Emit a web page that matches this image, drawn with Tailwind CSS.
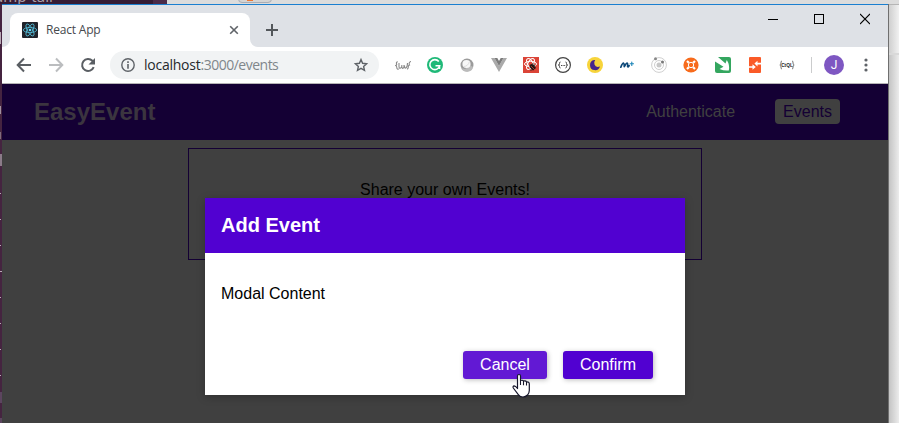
<!DOCTYPE html>
<html lang="en">
<head>
<meta charset="utf-8">
<title>React App</title>
<script src="https://cdn.jsdelivr.net/npm/@tailwindcss/browser@4"></script>
</head>
<body class="w-[899px] h-[423px] overflow-hidden bg-[#e8e8e8] font-['Liberation_Sans',Arial,sans-serif]">
<div class="relative flex flex-col w-[899px] h-[423px] overflow-hidden">
  <!-- desktop strip above the window -->
  <div class="flex h-1 shrink-0 overflow-hidden">
    <div class="relative w-[153px] h-1 overflow-hidden bg-[#351c35]"><span class="absolute -top-[12px] -left-[6px] text-[15px] leading-4 text-[#a99fa9] font-['Noto_Sans',sans-serif]">ump-tail</span></div>
    <div class="w-[14px] bg-[#4b2b49]"></div>
    <div class="relative flex-1 bg-[#dcdcdc]">
      <div class="absolute left-[71px] -top-3 w-[34px] h-[15px] rounded border border-[#a9adb5] bg-[#d4d4d4]"></div>
      <div class="absolute left-[80px] top-0 w-[6px] h-px bg-[#ee7733]"></div>
    </div>
  </div>
  <div class="flex flex-1 min-h-0">
    <!-- terminal edge -->
    <div class="relative w-[2px] shrink-0 bg-[#452440]">
      <div class="absolute top-7 h-3 w-px bg-[#b9aab6]"></div>
      <div class="absolute top-[102px] h-2 w-px bg-[#a090a0]"></div>
      <div class="absolute top-[128px] h-[7px] w-px bg-[#806a7d]"></div>
      <div class="absolute top-[150px] h-3 w-[2px] bg-[#8b7b89]"></div>
      <div class="absolute top-[189px] h-px w-px bg-[#b9aab6]"></div>
      <div class="absolute top-[215px] h-px w-px bg-[#b9aab6]"></div>
      <div class="absolute top-[241px] h-px w-px bg-[#b9aab6]"></div>
      <div class="absolute top-[267px] h-px w-[2px] bg-[#b9aab6]"></div>
      <div class="absolute top-[293px] h-px w-px bg-[#b9aab6]"></div>
      <div class="absolute top-[319px] h-px w-px bg-[#b9aab6]"></div>
      <div class="absolute top-[345px] h-px w-px bg-[#b9aab6]"></div>
      <div class="absolute top-[371px] h-px w-px bg-[#b9aab6]"></div>
      <div class="absolute top-[388px] h-[11px] w-[2px] bg-[#5c455f]"></div>
      <div class="absolute top-[414px] h-[5px] w-[2px] bg-[#5c455f]"></div>
    </div>
    <!-- browser window -->
    <div class="flex flex-col w-[886px] shrink-0 border-t border-[#1a7fd0] bg-white">
      <div class="flex h-[42px] shrink-0 bg-[#dee1e6]">
        <div class="relative ml-2 mt-2 flex items-center w-[240px] h-[34px] rounded-t-lg bg-white pl-3 pr-[10px]">
          <svg class="absolute -left-2 bottom-0" width="8" height="8"><path d="M8 0V8H0A8 8 0 0 0 8 0" fill="#fff"/></svg>
          <svg class="absolute -right-2 bottom-0" width="8" height="8"><path d="M0 0V8H8A8 8 0 0 1 0 0" fill="#fff"/></svg>
          <svg width="16" height="16" viewBox="0 0 16 16"><rect width="16" height="16" rx="1" fill="#20232a"/><g fill="none" stroke="#53b9d4" stroke-width=".85"><ellipse cx="8" cy="8" rx="6.7" ry="2.6"/><ellipse cx="8" cy="8" rx="6.7" ry="2.6" transform="rotate(60 8 8)"/><ellipse cx="8" cy="8" rx="6.7" ry="2.6" transform="rotate(120 8 8)"/></g><circle cx="8" cy="8" r="1.3" fill="#61dafb"/></svg>
          <span class="ml-2 text-[12px] leading-4 text-[#45494d] font-['Open_Sans',sans-serif] tracking-[-0.2px]">React App</span>
          <svg class="ml-auto" width="12" height="12" viewBox="0 0 12 12" stroke="#5f6368" stroke-width="1.6"><path d="M2.2 2.2l7.6 7.6M9.8 2.2L2.2 9.8"/></svg>
        </div>
        <svg class="ml-4 mt-[19px]" width="12" height="12" viewBox="0 0 12 12" stroke="#53575b" stroke-width="2"><path d="M6 0v12M0 6h12"/></svg>
        <div class="ml-auto flex">
          <div class="flex w-[46px] h-[29px] justify-center"><svg width="10" height="29" shape-rendering="crispEdges"><path d="M0 14.5h10" stroke="#000"/></svg></div>
          <div class="flex w-[46px] h-[29px] justify-center"><svg width="10" height="29" shape-rendering="crispEdges"><path d="M.5 9.5h9v9h-9z" fill="none" stroke="#000"/></svg></div>
          <div class="flex w-[46px] h-[29px] justify-center"><svg width="10" height="29"><path d="M0 9l10 10M10 9L0 19" stroke="#000" stroke-width="1.1"/></svg></div>
        </div>
      </div>
      <div class="flex items-center h-[37px] shrink-0 border-b border-[#b6b4b6] pl-[6px]">
        <div class="flex w-8 justify-center"><svg width="16" height="16" viewBox="0 0 16 16" fill="none" stroke="#5a5e63" stroke-width="2"><path d="M15 8H2.5M8 1.5L1.7 8 8 14.5"/></svg></div>
        <div class="flex w-8 justify-center"><svg width="16" height="16" viewBox="0 0 16 16" fill="none" stroke="#bbbdbf" stroke-width="2"><path d="M1 8h12.5M8 1.5L14.3 8 8 14.5"/></svg></div>
        <div class="flex w-8 justify-center"><svg width="16" height="16" viewBox="0 0 16 16"><path d="M13.7 10.2A6 6 0 1 1 12.4 3.8L14 5.5" fill="none" stroke="#5a5e63" stroke-width="2"/><path d="M15 1v6.5H8.5z" fill="#5a5e63"/></svg></div>
        <div class="ml-[6px] flex items-center w-[269px] h-7 rounded-full bg-[#f1f3f4] pl-[11px] pr-[10px]">
          <svg width="14" height="14" viewBox="0 0 14 14"><circle cx="7" cy="7" r="6.2" fill="none" stroke="#5f6368" stroke-width="1.4"/><path d="M7 6v4.7M7 3.3v1.6" stroke="#5f6368" stroke-width="1.6"/></svg>
          <span class="ml-[9px] text-[14px] leading-5 text-[#80868b] font-['Open_Sans',sans-serif] tracking-[-0.5px]"><span class="text-[#26292c] tracking-[-0.24px]">localhost</span>:3000/events</span>
          <svg class="ml-auto" width="16" height="16" viewBox="0 0 16 16"><path d="M8 2.600l1.600 3.700 4 .4-3 2.700.9 4L8 11.300l-3.500 2.100.9-4-3-2.700 4-.4z" fill="none" stroke="#5f6368" stroke-width="1.4"/></svg>
        </div>
        <div class="ml-2 flex items-center">
          <div class="flex w-8 justify-center"><svg width="16" height="16" viewBox="0 0 16 16" fill="none" stroke="#8a8a8a" stroke-width="1.100"><path d="M2.800 4.800Q.8 5 1.600 7 2 8 .6 8.500 2 9 1.800 11 2 12.400 3.800 12M4 6v3.500q.2 2.300 1.600 1.600T6.800 8.500M6.800 8v2q.7 2 1.600 1 .9-1 .5-3M9.500 8.500q0 3 1.200 2.600Q12.500 10 12.500 6M12 12.200q1.500-.5 1.300-2.700Q13.300 8.500 14.500 8 13.800 7 14.500 5.500 15.300 4.400 16 4.500"/></svg></div>
          <div class="flex w-8 justify-center"><svg width="16" height="16" viewBox="0 0 16 16"><circle cx="8" cy="8" r="8" fill="#1fb978"/><path d="M11.800 4.600A5 5 0 1 0 12.700 8.700H8.500M12.500 8.500v3.500" fill="none" stroke="#fff" stroke-width="1.600"/></svg></div>
          <div class="flex w-8 justify-center"><svg width="16" height="16" viewBox="0 0 16 16"><circle cx="8" cy="8" r="6.500" fill="#9b9b9b"/><path d="M2 11A6.500 6.500 0 0 0 14.200 10L11 8.500 6 12z" fill="#bbb"/><circle cx="7.500" cy="7" r="4.100" fill="#f7f7f7"/><path d="M4.500 9.500Q9 9.500 10.500 4.500" fill="none" stroke="#ddd"/></svg></div>
          <div class="flex w-8 justify-center"><svg width="16" height="16" viewBox="0 0 16 16"><path d="M0 1h3.500L8 9l4.500-8H16L8 15z" fill="#aaa"/><path d="M3.500 1H6.300L8 4l1.700-3h2.800L8 9z" fill="#7c7c7c"/></svg></div>
          <div class="flex w-8 justify-center"><svg width="16" height="16" viewBox="0 0 16 16"><path fill="#db4437" d="M0 0h16v16H0z"/><g fill="none" stroke="#fff" stroke-width="1"><ellipse cx="7.500" cy="7" rx="6" ry="2.700"/><ellipse cx="7.500" cy="7" rx="6" ry="2.700" transform="rotate(60 7.500 7)"/><ellipse cx="7.500" cy="7" rx="6" ry="2.700" transform="rotate(120 7.500 7)"/></g><ellipse cx="9.500" cy="10" rx="2.300" ry="3.300" fill="#251615" transform="rotate(-40 9.500 10)"/><path d="M6.500 10l6-2M7.500 13.500l5.500-3M10 6v7.500" stroke="#251615" stroke-width=".8"/><path d="M8 9l4 4" stroke="#db4437" stroke-width=".7"/></svg></div>
          <div class="flex w-8 justify-center"><svg width="16" height="16" viewBox="0 0 16 16" fill="none" stroke="#444"><circle cx="8" cy="8" r="7.400" stroke-width="1.200"/><path d="M5.500 5Q4.300 5 4.500 6.500T3.300 8q1.300.1 1.200 1.500T5.500 11M10.500 5q1.200 0 1 1.500T12.700 8q-1.300.1-1.200 1.500T10.500 11"/><path d="M6 8.500h1M7.600 8.500h1M9.200 8.500h1"/></svg></div>
          <div class="flex w-8 justify-center"><svg width="16" height="16" viewBox="0 0 16 16"><circle cx="8" cy="8" r="8" fill="#f7d43b"/><path d="M7.200 3A5.100 5.100 0 1 0 13 9.500Q8.600 11 7.500 7.500 6.600 5 8.200 3z" fill="#46258c"/></svg></div>
          <div class="flex w-8 justify-center"><svg width="16" height="16" viewBox="0 0 16 16" fill="none" stroke="#0b4778" stroke-linecap="round" stroke-linejoin="round"><path d="M1.800 10.200Q3.500 6 4.600 6.200q.6.200.7 3.400Q7.400 5.800 8.300 6.200q.6.300.3 3.300.6.800 1.500-.9" stroke-width="1.700"/><path d="M12.800 5v3.400M11.100 6.700h3.400" stroke="#1883b7" stroke-width="1.100"/></svg></div>
          <div class="flex w-8 justify-center"><svg width="16" height="16" viewBox="0 0 16 16" fill="none" stroke="#cfcfcf"><circle cx="8" cy="8" r="7.400"/><circle cx="8" cy="8" r="4.500"/><circle cx="8" cy="8" r="2.500" fill="#c7c7c7" stroke="none"/><circle cx="4.500" cy="1.800" r="1.500" fill="#888" stroke="none"/><circle cx="11.500" cy="5" r="1.500" fill="#777" stroke="none"/></svg></div>
          <div class="flex w-8 justify-center"><svg width="16" height="16" viewBox="0 0 16 16"><circle cx="8" cy="8" r="7.600" fill="#f76b1c"/><circle cx="8" cy="8" r="2.700" fill="none" stroke="#fff" stroke-width="1"/><path d="M5.800 5.800L4 4M10.200 5.800L12 4M10.200 10.200L12 12M5.800 10.200L4 12" stroke="#fff" stroke-width="2.200"/></svg></div>
          <div class="flex w-8 justify-center"><svg width="16" height="16" viewBox="0 0 16 16"><rect width="16" height="16" rx="2" fill="#34a65f"/><path d="M0 0h3l7.500 6.500L11.800 3Q15 8 13.800 13.500 9 14 4.500 12l4-2.200L0 4.500z" fill="#fff"/></svg></div>
          <div class="flex w-8 justify-center"><svg width="16" height="16" viewBox="0 0 16 16"><rect x="2" width="12" height="16" rx="1" fill="#fa5a28"/><path d="M14 5.800h-3.500v-2L7.400 6.600l3.100 2.800v-2H14zM2 9.200h3.500v-2L8.800 10l-3.300 2.800v-2H2z" fill="#fff"/></svg></div>
          <div class="flex w-8 justify-center"><svg width="16" height="16" viewBox="0 0 16 16"><path d="M3 4Q1.600 4 2 6 2 7.700.8 8 2 8.300 2 10q-.3 2 1 2M13 4q1.400 0 1 2 0 1.700 1.200 2-1.200.3-1.200 2 .3 2-1 2" fill="none" stroke="#777"/><text x="8" y="10" text-anchor="middle" font-family="Liberation Sans" font-weight="bold" font-size="4.800" fill="#222">CtQL</text></svg></div>
        </div>
        <div class="ml-2 w-px h-4 bg-[#cbcccd]"></div>
        <div class="ml-[12px] flex items-center justify-center size-5 rounded-full bg-[#7e57c2] text-white text-[12px] leading-none font-['Roboto',sans-serif]">J</div>
        <svg class="ml-5" width="4" height="14" viewBox="0 0 4 14" fill="#5f6368"><circle cx="2" cy="2" r="1.600"/><circle cx="2" cy="7" r="1.600"/><circle cx="2" cy="12" r="1.600"/></svg>
      </div>
      <!-- page -->
      <div class="relative flex flex-col flex-1 min-h-0 overflow-hidden bg-[#404040]">
        <header class="flex items-center h-14 shrink-0 bg-[#140034] pl-8 pr-12">
          <h1 class="text-[24px] leading-7 font-bold text-[#3b353f]">EasyEvent</h1>
          <nav class="ml-auto flex items-center gap-8 text-[16px] leading-[18px]">
            <a class="px-2 py-1 text-[#404040]">Authenticate</a>
            <a class="px-2 h-[25px] mb-px leading-[25px] rounded-[4px] bg-[#404040] text-[#140034]">Events</a>
          </nav>
        </header>
        <main class="flex justify-center pt-2">
          <section class="w-[514px] h-[112px] border border-[#140034] pt-8 text-center text-[16px] leading-[18px] text-black">Share your own Events!</section>
        </main>
        <div class="absolute left-[203px] top-[114px] flex flex-col w-[480px] h-[197px] bg-white shadow-[0_2px_8px_rgba(0,0,0,0.26)]">
          <div class="h-[55px] shrink-0 bg-[#5101d1] px-4 pt-4"><h2 class="text-[20px] leading-[23px] font-bold text-white">Add Event</h2></div>
          <p class="px-4 pt-8 text-[16px] leading-[18px] text-black">Modal Content</p>
          <div class="mt-auto mb-4 mr-8 flex justify-end gap-4 text-[16px] leading-[28px] text-white">
            <button class="w-[84px] h-7 rounded-[3px] bg-[#6219d4] shadow-[1px_1px_5px_rgba(0,0,0,0.26)]">Cancel</button>
            <button class="w-[90px] h-7 rounded-[3px] bg-[#5101d1] shadow-[1px_1px_5px_rgba(0,0,0,0.26)]">Confirm</button>
          </div>
        </div>
      </div>
    </div>
    <!-- area right of the window -->
    <div class="w-px shrink-0 bg-[#6f6f6f]"></div>
    <div class="flex flex-col flex-1 border-t border-[#b5b5b5]">
      <div class="h-[48px] bg-linear-to-r from-[#cfcfcf] to-[#f1f1f1]"></div>
      <div class="h-[2px] bg-[#d9d9d9]"></div>
      <div class="flex-1 bg-linear-to-r from-[#c4c4c4] to-[#ececec]"></div>
    </div>
  </div>
  <!-- hand cursor -->
  <svg class="absolute left-[511px] top-[373px]" width="21" height="26" viewBox="0 0 21 26"><path d="M6.500 14V3Q6.500 1.500 8 1.500T9.500 3v4.500Q12 6.800 12.500 8 15 7.500 15.500 8.900 18.300 8.700 18.300 11v6.500q0 2.500-1.800 4.500Q14.500 24 12 24q-3 0-4.500-2.200L2.300 15Q1.500 13 3.200 12.800 4.500 12.800 6.500 15.500z" fill="#fff" stroke="#15152a" stroke-width="1.200" stroke-linejoin="round"/><path d="M9.500 7.500v4.500M12.500 8v4.200M15.500 8.900v3.600" stroke="#15152a" stroke-width="1.100"/></svg>
</div>
</body>
</html>
